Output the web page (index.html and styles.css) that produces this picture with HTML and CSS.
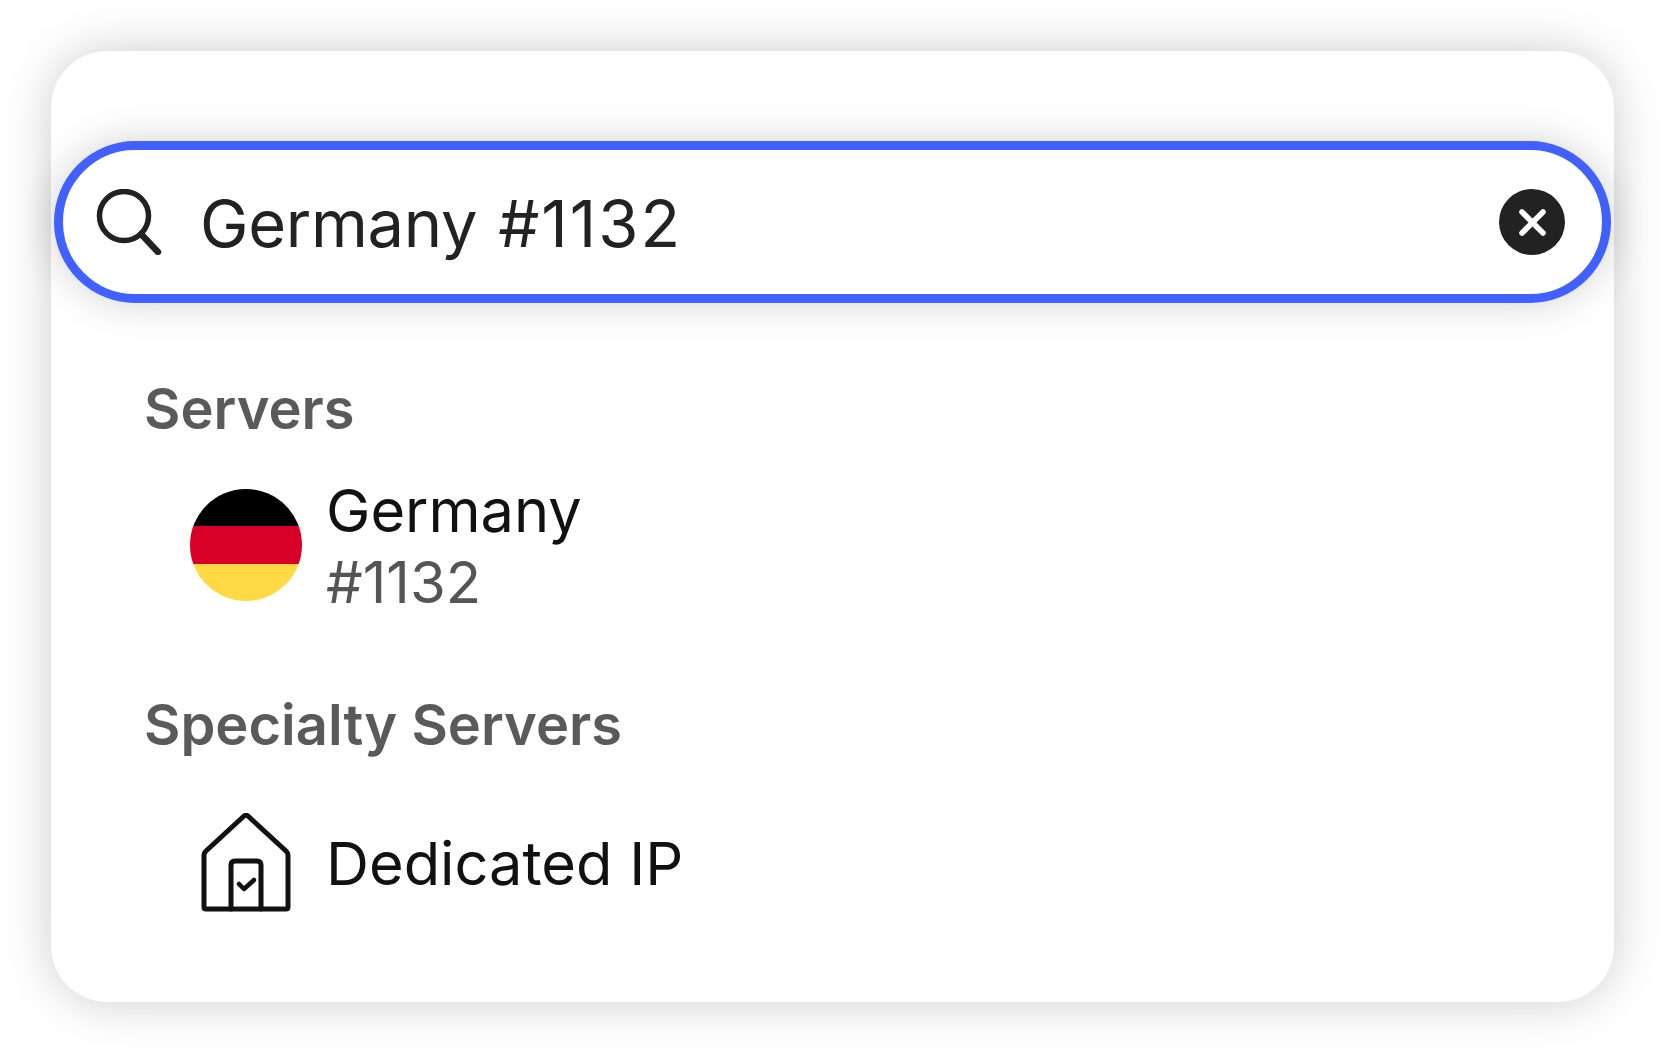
FILE: index.html
```html
<!DOCTYPE html>
<html lang="en">
<head>
  <meta charset="UTF-8">
  <title>Server Search</title>
  <link rel="stylesheet" href="styles.css">
</head>
<body>
  <div class="card">
    <!-- Search field -->
    <div class="search">
      <svg class="search-icon" width="66" height="66" viewBox="0 0 66 66" fill="none" stroke="#222" stroke-width="5.5" stroke-linecap="round">
        <circle cx="28" cy="27" r="24.5"/>
        <line x1="45" y1="45" x2="62" y2="63" stroke-width="6.5"/>
      </svg>
      <span class="search-text">Germany <span class="search-num">#1132</span></span>
      <span class="clear">
        <svg width="29" height="29" viewBox="0 0 29 29" stroke="#fff" stroke-width="5.5" stroke-linecap="round">
          <line x1="4" y1="4" x2="25" y2="25"/>
          <line x1="25" y1="4" x2="4" y2="25"/>
        </svg>
      </span>
    </div>

    <!-- Results -->
    <h3 class="group-title servers-title">Servers</h3>
    <div class="row">
      <div class="row-icon">
        <div class="flag">
          <div class="flag-black"></div>
          <div class="flag-red"></div>
          <div class="flag-yellow"></div>
        </div>
      </div>
      <div>
        <div class="row-name">Germany</div>
        <div class="row-sub">#1132</div>
      </div>
    </div>

    <h3 class="group-title specialty-title">Specialty Servers</h3>
    <div class="row dedicated-row">
      <div class="row-icon">
        <svg width="90" height="100" viewBox="0 0 90 100" fill="none" stroke="#111" stroke-width="5" stroke-linejoin="round" stroke-linecap="round">
          <path d="M3 42 Q3 40 5 38 L43 3 Q45 1.500 47 3 L85 38 Q87 40 87 42 V94 Q87 96 85 96 H5 Q3 96 3 94 Z"/>
          <path d="M30 96 V52 Q30 48 34 48 H56 Q60 48 60 52 V96"/>
          <path d="M38 71 L43 76 L53 67" stroke-width="4.5"/>
        </svg>
      </div>
      <div class="row-name">Dedicated IP</div>
    </div>
  </div>
</body>
</html>
```

FILE: styles.css
```css
body {
  margin: 0;
  background-color: #fff;
  font-family: Inter, "Noto Sans", sans-serif;
}
.card {
  box-sizing: border-box;
  width: 1563px;
  height: 951px;
  margin: 51px;
  padding: 90px 3px 0;
  background: #fff;
  border-radius: 56px;
  box-shadow: 0 0 50px rgba(0, 0, 0, 0.2);
}
.search {
  box-sizing: border-box;
  display: flex;
  align-items: center;
  height: 162px;
  padding: 0 37px 0 33px;
  border: 9px solid #4060ff;
  border-radius: 81px;
  background: #fff;
  box-shadow: 0 0 40px rgba(0, 0, 0, 0.18);
}
.search-icon {
  flex: none;
}
.search-text {
  flex: 1;
  margin: 4px 0 0 38px;
  font-size: 65px;
  line-height: 80px;
  font-weight: 440;
  letter-spacing: -0.3px;
  word-spacing: 3px;
  color: #222;
}
.search-num {
  letter-spacing: 2px;
}
.clear {
  display: flex;
  align-items: center;
  justify-content: center;
  width: 66px;
  height: 66px;
  border-radius: 50%;
  background: #222;
}
.group-title {
  margin: 0;
  padding-left: 90px;
  font-size: 56px;
  line-height: 70px;
  font-weight: 600;
  color: #5a5a5a;
}
.servers-title {
  margin-top: 71px;
}
.specialty-title {
  margin-top: 73px;
}
.row {
  display: flex;
  align-items: center;
  gap: 24px;
  padding-left: 136px;
  margin-top: 31px;
}
.dedicated-row {
  margin-top: 53px;
}
.row-icon {
  display: flex;
  justify-content: center;
  width: 112px;
}
.flag {
  width: 112px;
  height: 112px;
  margin-bottom: 2px;
  border-radius: 50%;
  overflow: hidden;
}
.flag-black {
  height: 37px;
  background: #000;
}
.flag-red {
  height: 38px;
  background: #d80027;
}
.flag-yellow {
  height: 37px;
  background: #ffda44;
}
.row-name {
  font-size: 59.5px;
  line-height: 70px;
  font-weight: 410;
  color: #111;
}
.row-sub {
  margin-top: 2px;
  font-size: 58px;
  line-height: 70px;
  font-weight: 410;
  color: #555;
}
```
